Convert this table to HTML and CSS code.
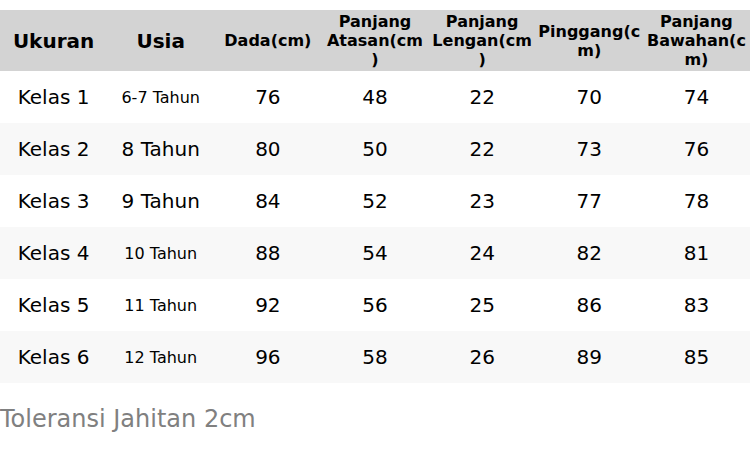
FILE: index.html
```html
<!DOCTYPE html>
<html lang="id">
<head>
<meta charset="utf-8">
<title>Ukuran</title>
<link rel="stylesheet" href="styles.css">
</head>
<body>
<div class="page">
  <table class="size-table">
    <thead>
      <tr>
        <th class="big">Ukuran</th>
        <th class="big">Usia</th>
        <th>Dada(cm)</th>
        <th>Panjang Atasan(cm)</th>
        <th>Panjang Lengan(cm)</th>
        <th>Pinggang(cm)</th>
        <th>Panjang Bawahan(cm)</th>
      </tr>
    </thead>
    <tbody>
      <tr><td>Kelas 1</td><td class="small">6-7 Tahun</td><td>76</td><td>48</td><td>22</td><td>70</td><td>74</td></tr>
      <tr><td>Kelas 2</td><td>8 Tahun</td><td>80</td><td>50</td><td>22</td><td>73</td><td>76</td></tr>
      <tr><td>Kelas 3</td><td>9 Tahun</td><td>84</td><td>52</td><td>23</td><td>77</td><td>78</td></tr>
      <tr><td>Kelas 4</td><td class="small">10 Tahun</td><td>88</td><td>54</td><td>24</td><td>82</td><td>81</td></tr>
      <tr><td>Kelas 5</td><td class="small">11 Tahun</td><td>92</td><td>56</td><td>25</td><td>86</td><td>83</td></tr>
      <tr><td>Kelas 6</td><td class="small">12 Tahun</td><td>96</td><td>58</td><td>26</td><td>89</td><td>85</td></tr>
    </tbody>
  </table>
  <p class="note">Toleransi Jahitan 2cm</p>
</div>
</body>
</html>
```
FILE: styles.css
```css
html, body {
  margin: 0;
  padding: 0;
  background: #ffffff;
}
body {
  font-family: "DejaVu Sans", sans-serif;
  color: #000;
}
.page {
  padding-top: 10px;
}
.size-table {
  width: 750px;
  border-collapse: collapse;
  table-layout: fixed;
}
.size-table th {
  background: #d3d3d3;
  font-size: 16px;
  font-weight: bold;
  line-height: normal;
  padding: 0 2px;
  height: 61px;
  box-sizing: border-box;
  text-align: center;
  vertical-align: middle;
  overflow-wrap: break-word;
}
.size-table th.big {
  font-size: 20px;
}
.size-table td {
  font-size: 20px;
  height: 52px;
  padding: 0 2px;
  box-sizing: border-box;
  text-align: center;
  vertical-align: middle;
}
.size-table td.small {
  font-size: 16px;
}
.size-table tbody tr:nth-child(even) td {
  background: #f8f8f8;
}
.note {
  margin: 22px 0 0;
  font-size: 24px;
  color: #808080;
}
```
